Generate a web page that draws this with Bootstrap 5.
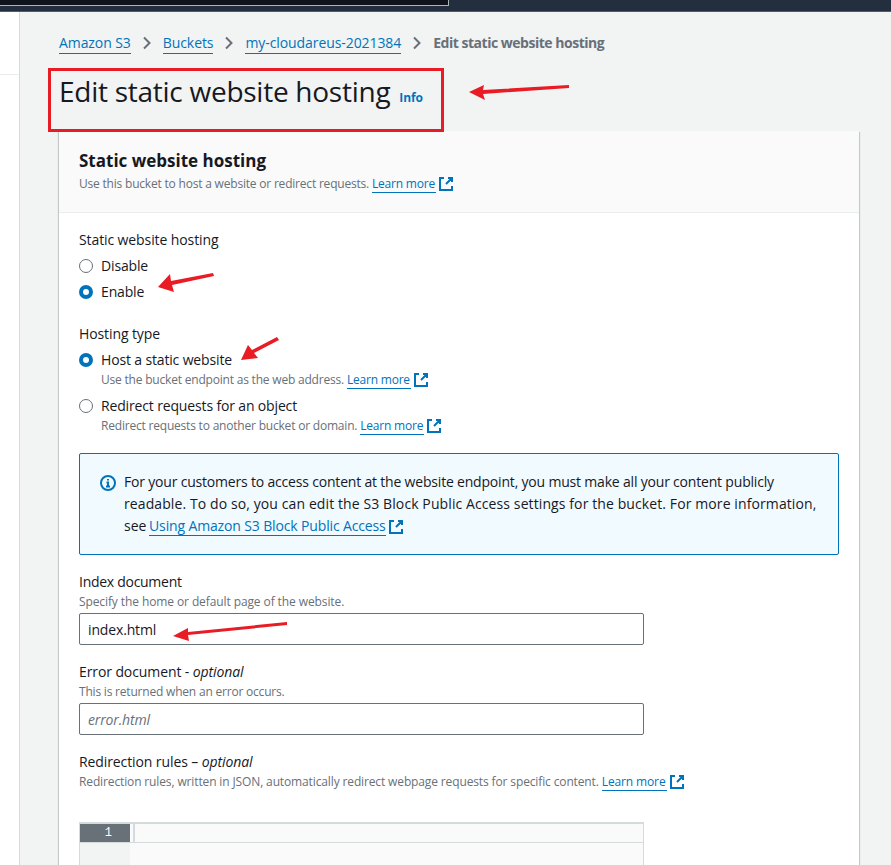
<!DOCTYPE html>
<html lang="en">
<head>
  <meta charset="UTF-8">
  <title>Edit static website hosting</title>
  <link href="https://cdn.jsdelivr.net/npm/bootstrap@5.3.0/dist/css/bootstrap.min.css" rel="stylesheet">
  <style>
    body { background: #f2f3f3; color: #16191f; font-family: "Open Sans", "Noto Sans", sans-serif; font-size: 14px; line-height: 22px; height: 865px; overflow: hidden; position: relative; }
    a { color: #0073bb; text-decoration: none; }
    .topstrip { height: 12px; background: #232f3e; border-bottom: 1px solid #545b64; }
    .topstrip div { width: 449px; height: 6px; background: #10141c; border: 1px solid #aab7b8; border-width: 0 1px 1px 0; }
    .side-rail { width: 20px; background: #fff; border-right: 1px solid #d5dbdb; height: 853px; flex: none; }
    .side-rail div { height: 63px; border-bottom: 1px solid #eaeded; }
    .page-main { padding: 20px 32px 0 39px; width: 871px; flex: none; }
    .crumbs { height: 22px; margin-bottom: 0; gap: 11px; align-items: center; }
    .crumbs a { border-bottom: 1px solid #0073bb; line-height: 20px; letter-spacing: -.08px; }
    .crumbs b { color: #687078; font-weight: 700; letter-spacing: -.48px; }
    .crumbs svg { width: 10px; height: 14px; }
    .page-title { font-size: 28px; line-height: 40px; font-weight: 400; margin: 0; padding-top: 17px; height: 77px; letter-spacing: -.26px; }
    .page-title a { font-size: 12px; font-weight: 700; margin-left: 2px; letter-spacing: -.1px; }
    .panel { border: 0; border-radius: 0; box-shadow: 0 1px 1px 0 rgba(0,28,36,.3), 1px 1px 1px 0 rgba(0,28,36,.15), -1px 1px 1px 0 rgba(0,28,36,.15); height: 900px; }
    .panel .card-header { background: #fafafa; border-bottom: 1px solid #eaeded; border-radius: 0; padding: 19px 20px 0; height: 82px; }
    .panel .card-body { padding: 17px 20px 0; }
    .panel h2 { font-size: 17px; line-height: 22px; font-weight: 700; margin: 0 0 3px; }
    .hint { font-size: 12px; line-height: 18px; color: #687078; display: block; letter-spacing: -.2px; }
    .hint-long { letter-spacing: -.13px; }
    .hint-wide { letter-spacing: -.1px; }
    .field-name + .hint { margin-top: 1px; }
    .hint a { border-bottom: 1px solid #0073bb; padding-right: 1px; }
    .ext { width: 16px; height: 16px; margin-left: 2px; vertical-align: -4px; fill: none; stroke: #0073bb; stroke-width: 2; }
    .field-name { display: block; line-height: 20px; letter-spacing: -.1px; }
    .field-tight { letter-spacing: -.28px; }
    .form-check { padding-left: 22px; margin: 0; min-height: 0; }
    .form-check .form-check-input { width: 14px; height: 14px; margin: 5px 0 0 -22px; border: 1.5px solid #687078; }
    .form-check .form-check-input:checked { background-color: #fff; border: 4px solid #0073bb; background-image: none; }
    .form-check-label { display: block; line-height: 24px; letter-spacing: -.15px; }
    .form-check .hint { margin-top: -1px; }
    .opt-gap { height: 2px; }
    .opt-gap-wide { height: 5px; }
    .note-box { background: #f1faff; border: 1px solid #0073bb; border-radius: 2px; padding: 17px 20px; margin: 18px 0 17px; height: 102px; gap: 8px; color: #16191f; }
    .note-box > svg { width: 16px; height: 16px; flex: none; margin-top: 4px; fill: none; stroke: #0073bb; stroke-width: 2; }
    .note-box a { border-bottom: 1px solid #0073bb; letter-spacing: -.14px; margin-left: -1px; }
    .note-one { letter-spacing: -.19px; }
    .note-two { letter-spacing: .1px; }
    .text-box { width: 565px; height: 32px; border: 1px solid #687078; border-radius: 2px; padding: 4px 8px; font-size: 14px; line-height: 22px; color: #16191f; letter-spacing: -.15px; margin-top: 2px; }
    .text-box::placeholder { font-style: italic; color: #687078; }
    .gap-top { margin-top: 17px; }
    .code-box { width: 565px; height: 60px; margin-top: 31px; background: #fafafa; border: 1px solid #d5dbdb; border-width: 2px 1px 0; }
    .code-line { height: 19px; border-bottom: 1px solid #d5dbdb; }
    .code-num { width: 50px; background: #687078; color: #fff; font-size: 12px; line-height: 19px; text-align: right; padding-right: 18px; font-family: "Liberation Mono", monospace; }
    .code-cursor { width: 2px; margin-left: 3px; background: #d5dbdb; }
    .code-gutter { width: 50px; height: 40px; background: #f2f3f3; }
    .red-frame { position: absolute; left: 48px; top: 68px; width: 396px; height: 64px; border: 3px solid #e81c24; }
    .arrows { position: absolute; left: 0; top: 0; width: 891px; height: 865px; pointer-events: none; }
  </style>
</head>
<body>

<div class="topstrip"><div></div></div>

<div class="d-flex">
  <div class="side-rail"><div></div></div>

  <div class="page-main">
    <nav class="d-flex crumbs">
      <a href="#">Amazon S3</a>
      <svg viewBox="0 0 10 14" fill="none" stroke="#687078" stroke-width="2"><path d="M2 1.500 7.500 7 2 12.500"/></svg>
      <a href="#">Buckets</a>
      <svg viewBox="0 0 10 14" fill="none" stroke="#687078" stroke-width="2"><path d="M2 1.500 7.500 7 2 12.500"/></svg>
      <a href="#">my-cloudareus-2021384</a>
      <svg viewBox="0 0 10 14" fill="none" stroke="#687078" stroke-width="2"><path d="M2 1.500 7.500 7 2 12.500"/></svg>
      <b>Edit static website hosting</b>
    </nav>

    <h1 class="page-title">Edit static website hosting <a href="#">Info</a></h1>

    <div class="card panel">
      <div class="card-header">
        <h2>Static website hosting</h2>
        <span class="hint">Use this bucket to host a website or redirect requests. <a href="#">Learn more</a><svg class="ext" viewBox="0 0 16 16"><path d="M10 2h4v4M14 2 8 8M6 2H2v12h12v-4"/></svg></span>
      </div>
      <div class="card-body">
        <span class="field-name mb-1">Static website hosting</span>
        <div class="form-check">
          <input class="form-check-input" type="radio" name="hosting" id="h1">
          <label class="form-check-label" for="h1">Disable</label>
        </div>
        <div class="opt-gap"></div>
        <div class="form-check">
          <input class="form-check-input" type="radio" name="hosting" id="h2" checked>
          <label class="form-check-label" for="h2">Enable</label>
        </div>

        <span class="field-name mb-1 mt-3 pt-1">Hosting type</span>
        <div class="form-check">
          <input class="form-check-input" type="radio" name="htype" id="t1" checked>
          <label class="form-check-label" for="t1">Host a static website</label>
          <span class="hint">Use the bucket endpoint as the web address. <a href="#">Learn more</a><svg class="ext" viewBox="0 0 16 16"><path d="M10 2h4v4M14 2 8 8M6 2H2v12h12v-4"/></svg></span>
        </div>
        <div class="opt-gap-wide"></div>
        <div class="form-check">
          <input class="form-check-input" type="radio" name="htype" id="t2">
          <label class="form-check-label" for="t2">Redirect requests for an object</label>
          <span class="hint">Redirect requests to another bucket or domain. <a href="#">Learn more</a><svg class="ext" viewBox="0 0 16 16"><path d="M10 2h4v4M14 2 8 8M6 2H2v12h12v-4"/></svg></span>
        </div>

        <div class="d-flex note-box">
          <svg viewBox="0 0 16 16"><circle cx="8" cy="8" r="7"/><path d="M8 11.500V7.500H6.500M6 11.500h4M8 4v1.500"/></svg>
          <div><span class="note-one">For your customers to access content at the website endpoint, you must make all your content publicly</span> <span class="note-two">readable. To do so, you can edit the S3 Block Public Access settings for the bucket. For more information,</span> see <a href="#">Using Amazon S3 Block Public Access</a><svg class="ext" viewBox="0 0 16 16"><path d="M10 2h4v4M14 2 8 8M6 2H2v12h12v-4"/></svg></div>
        </div>

        <span class="field-name field-tight">Index document</span>
        <span class="hint hint-wide">Specify the home or default page of the website.</span>
        <input class="d-block text-box" type="text" value="index.html">

        <span class="field-name gap-top">Error document - <i>optional</i></span>
        <span class="hint">This is returned when an error occurs.</span>
        <input class="d-block text-box" type="text" placeholder="error.html">

        <span class="field-name gap-top">Redirection rules – <i>optional</i></span>
        <span class="hint hint-long">Redirection rules, written in JSON, automatically redirect webpage requests for specific content. <a href="#">Learn more</a><svg class="ext" viewBox="0 0 16 16"><path d="M10 2h4v4M14 2 8 8M6 2H2v12h12v-4"/></svg></span>

        <div class="code-box">
          <div class="d-flex code-line"><div class="code-num">1</div><div class="code-cursor"></div></div>
          <div class="code-gutter"></div>
        </div>
      </div>
    </div>
  </div>
</div>

<div class="red-frame"></div>
<svg class="arrows" viewBox="0 0 891 865" fill="#e81c24" stroke="none">
  <path d="M469 92 484 85 483 90 569 85 569 88 483 94 485 100Z"/>
  <path d="M158 287 170 274 171 281 213 273 214 276 172 285 174 292Z"/>
  <path d="M241 360 248 345 252 350 277 337 279 340 254 353 258 358Z"/>
  <path d="M173 636 188 628 188 632 287 622 287 625 188 635 189 641Z"/>
</svg>

<script src="https://cdn.jsdelivr.net/npm/bootstrap@5.3.0/dist/js/bootstrap.bundle.min.js"></script>
</body>
</html>
